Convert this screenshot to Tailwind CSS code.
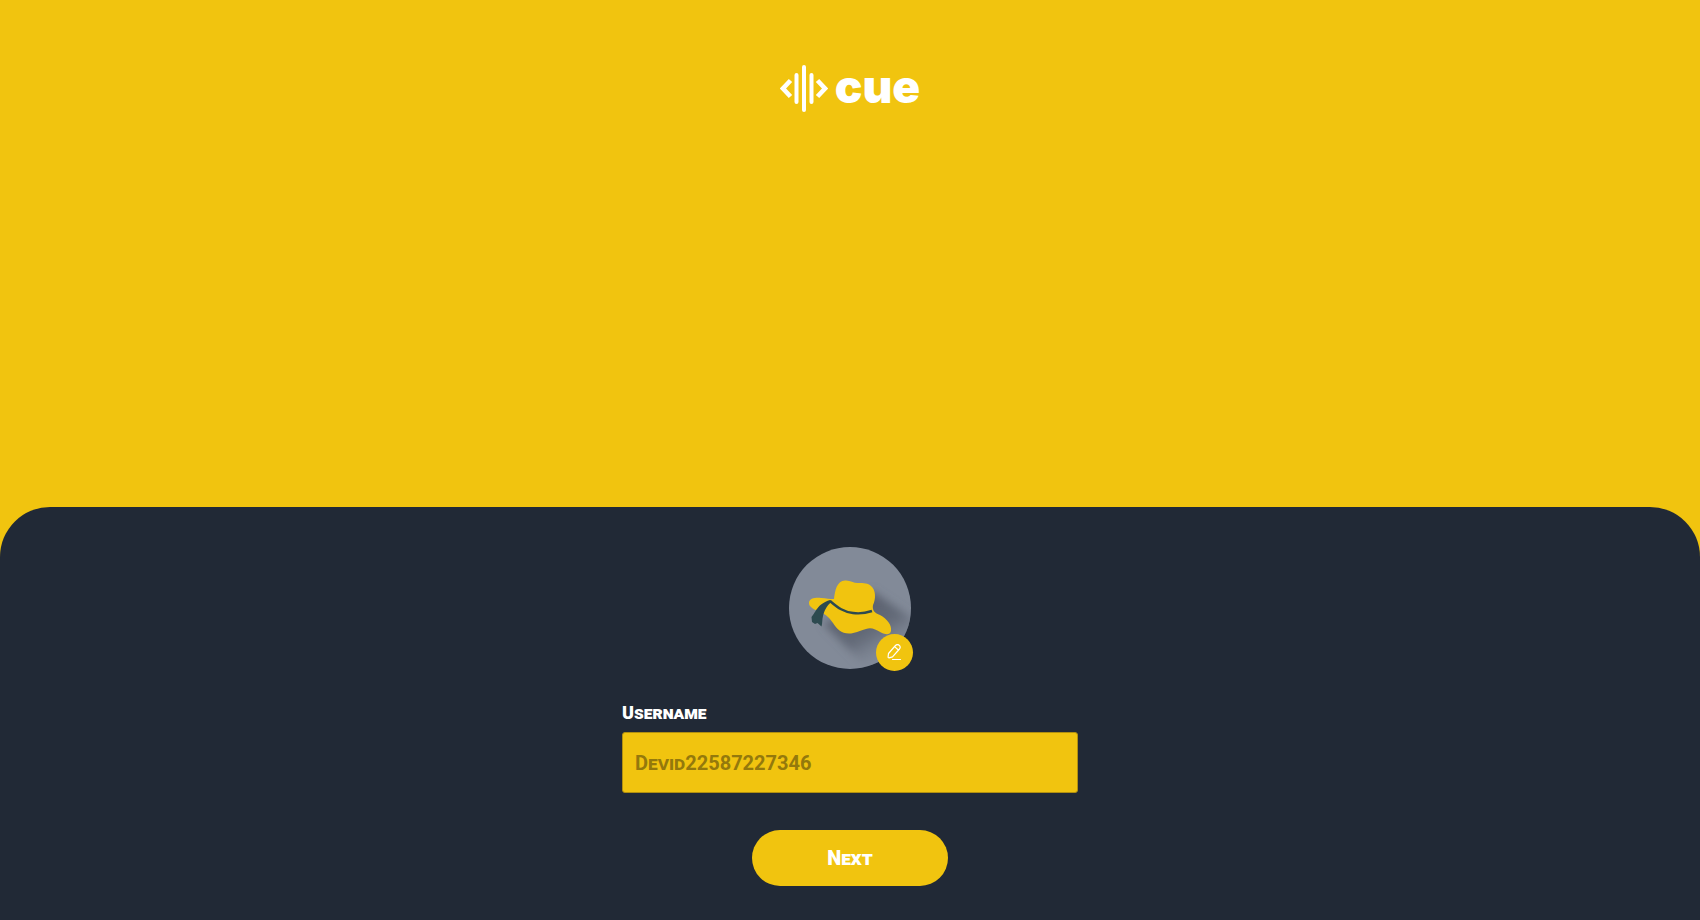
<!DOCTYPE html>
<html lang="en">
<head>
<meta charset="utf-8">
<meta name="viewport" content="width=device-width, initial-scale=1">
<title>Cue</title>
<script src="https://cdn.jsdelivr.net/npm/@tailwindcss/browser@4"></script>
</head>
<body class="flex min-h-screen flex-col bg-[#f1c40f] font-['Roboto','Noto_Sans',sans-serif] text-white">
  <header class="flex justify-center pt-16">
    <h1 class="flex items-start gap-[7px]">
      <svg class="block" width="48" height="48" viewBox="0 0 48 48" aria-hidden="true">
        <g fill="none" stroke="#fff" stroke-width="4" stroke-linecap="round">
          <path d="M24 3V46M16.500 11V38M31.500 11V38"/>
        </g>
        <g fill="none" stroke="#fff" stroke-width="4.600" stroke-linejoin="miter">
          <path d="M10.500 16.500L3 24.500L10.500 32.500M37.500 16.500L45 24.500L37.500 32.500"/>
        </g>
      </svg>
      <span class="font-['Inter',sans-serif] text-[46px] leading-11 font-black">cue</span>
    </h1>
  </header>
  <main class="mt-auto flex flex-col items-center rounded-t-[50px] bg-[#212936] px-6 pt-10 pb-[34px]">
    <div class="relative">
      <svg class="block" width="122" height="122" viewBox="0 0 122 122" role="img" aria-label="Hat avatar">
        <defs>
          <clipPath id="disc"><circle cx="61" cy="61" r="61"/></clipPath>
          <linearGradient id="shade" gradientUnits="userSpaceOnUse" x1="68" y1="60" x2="98" y2="110">
            <stop offset="0" stop-color="#5b616e"/>
            <stop offset=".5" stop-color="#646b79"/>
            <stop offset="1" stop-color="#828a98" stop-opacity=".3"/>
          </linearGradient>
          <filter id="soft" x="-20%" y="-20%" width="140%" height="140%"><feGaussianBlur stdDeviation="4"/></filter>
        </defs>
        <circle cx="61" cy="61" r="61" fill="#828a98"/>
        <g clip-path="url(#disc)">
          <path d="M83 44L130 76V130H86L34 76L55 70Z" fill="url(#shade)" filter="url(#soft)"/>
        </g>
        <path d="M45 52C46 43 48 34 56 33.500C61 33 64 36 69 36C75 36 79 36 82 39C87 43 87 52 84 58C83 64 86 66 91 68C98 72 103 78 102 84C101 88 97 88 92 85.500C86 82 82 80 77 82C70 84 66 86.500 60 86.500C52 86.500 48 82 44 76C40 70 36 67 33 66C24 62 20 60 20 56C20 51 27 50.500 32 51C37 51.500 41 52 45 52Z" fill="#f1c40f"/>
        <path d="M41 54C49 61 55 65 64 66C71 67 77 66 83 64" fill="none" stroke="#2d4a50" stroke-width="2.400"/>
        <path d="M43 54.500C37 59 35 65 34 69C33 73 33.500 76 32.500 79.500L28.500 76L26 77L23 75L22.500 70C27 65 28 57 41 53Z" fill="#2d4a50"/>
      </svg>
      <button type="button" aria-label="Edit avatar" class="absolute -right-0.5 -bottom-0.5 flex size-[37px] items-center justify-center rounded-full bg-[#f1c40f]">
        <svg width="17" height="17" viewBox="0 0 17 17" fill="none" stroke="#fff" stroke-width="1.200" stroke-linecap="round" stroke-linejoin="round">
          <path d="M2.500 9.500L9.500 1.500Q11.500 -.300 13.300 1.400Q15 3 13.500 5L6.500 12.800L3 13.800Q2 13.800 2.100 12.800ZM8.600 2.600L12.400 6M6.500 15.500H14.500"/>
        </svg>
      </button>
    </div>
    <form class="mt-8 flex w-full max-w-[456px] flex-col items-center" onsubmit="return false">
      <label for="username" class="self-start text-lg leading-6 font-black [font-variant-caps:small-caps]">Username</label>
      <input id="username" type="text" placeholder="Devid22587227346" class="mt-[7px] h-[61px] w-full rounded-[3px] border border-[#b18f10] bg-[#f1c40f] px-3 text-xl font-bold text-[#212936] outline-none [font-variant-caps:small-caps] placeholder:text-[#94790c]">
      <button type="submit" class="mt-[37px] h-14 w-[196px] rounded-full bg-[#f1c40f] text-xl leading-7 font-black [font-variant-caps:small-caps]">Next</button>
    </form>
  </main>
</body>
</html>
